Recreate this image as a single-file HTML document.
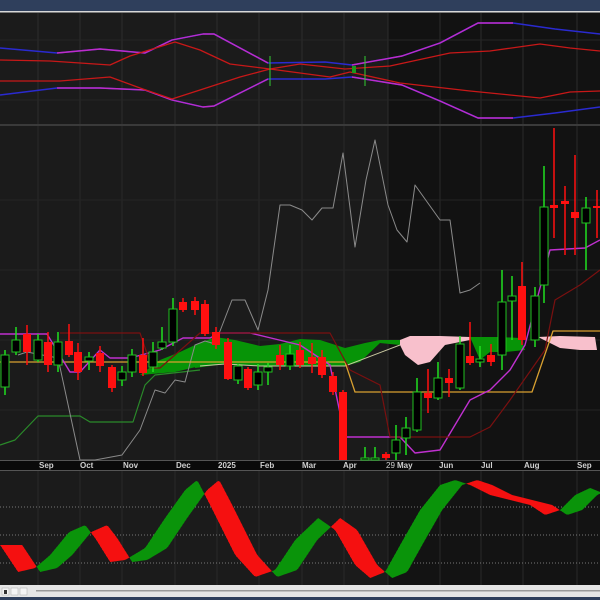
<!DOCTYPE html>
<html><head><meta charset="utf-8"><style>
html,body{margin:0;padding:0;background:#1b1b1b;width:600px;height:600px;overflow:hidden}
svg{display:block}
text{font-family:"Liberation Sans",sans-serif;font-size:8px;font-weight:bold;fill:#d0d0d0}
</style></head><body>
<svg id="s" width="600" height="600" xmlns="http://www.w3.org/2000/svg">
<rect x="0" y="0" width="600" height="600" fill="#1b1b1b"/>
<rect x="388" y="13" width="212" height="448" fill="#121212"/>
<rect x="388" y="471" width="212" height="114" fill="#131313"/>
<rect x="0" y="0" width="600" height="11" fill="#2f3f5c"/>
<rect x="0" y="11" width="600" height="1.5" fill="#d8d8d8"/>
<rect x="0" y="124" width="600" height="2" fill="#3a3a3a"/>
<rect x="0" y="460" width="600" height="11" fill="#0a0a0a"/>
<line x1="0" y1="460.5" x2="600" y2="460.5" stroke="#555"/>
<line x1="0" y1="470.5" x2="600" y2="470.5" stroke="#555"/>
<g id="grid"></g>
<g id="top"></g>
<g id="main"></g>
<g id="osc"></g>
<g>
<text x="39" y="468">Sep</text><text x="80" y="468">Oct</text><text x="123" y="468">Nov</text>
<text x="176" y="468">Dec</text><text x="218" y="468">2025</text><text x="260" y="468">Feb</text>
<text x="302" y="468">Mar</text><text x="343" y="468">Apr</text><text x="386" y="468" style="font-weight:normal">29</text>
<text x="397" y="468">May</text><text x="439" y="468">Jun</text><text x="481" y="468">Jul</text>
<text x="524" y="468">Aug</text><text x="577" y="468">Sep</text>
</g>
<rect x="0" y="585" width="600" height="12" fill="#e6e6e6"/>
<rect x="36" y="590" width="564" height="1.5" fill="#9a9a9a"/>
<rect x="2" y="588" width="7" height="7" fill="#f4f4f4" stroke="#aaa" stroke-width="0.5"/>
<rect x="4" y="590" width="3" height="4" fill="#333"/>
<rect x="11" y="588" width="7" height="7" fill="#f4f4f4" stroke="#aaa" stroke-width="0.5"/>
<rect x="20" y="588" width="7" height="7" fill="#f4f4f4" stroke="#aaa" stroke-width="0.5"/>
<rect x="0" y="597" width="600" height="3" fill="#2f3f5c"/>
</svg>
<script>
var NS="http://www.w3.org/2000/svg";
function el(p,t,a){var e=document.createElementNS(NS,t);for(var k in a)e.setAttribute(k,a[k]);document.getElementById(p).appendChild(e);return e;}
function pl(p,pts,c,w){el(p,"polyline",{points:pts.map(function(q){return q[0]+","+q[1]}).join(" "),fill:"none",stroke:c,"stroke-width":w||1.3,"stroke-linejoin":"round"});}
[38,80,122,175,217,259,302,344,388,440,481,523,577].forEach(function(x){
 el("grid","line",{x1:x,y1:13,x2:x,y2:124,stroke:"#2c2c2c"});
 el("grid","line",{x1:x,y1:126,x2:x,y2:460,stroke:"#2a2a2a"});
 el("grid","line",{x1:x,y1:471,x2:x,y2:585,stroke:"#2a2a2a"});
});
[40,100].forEach(function(y){el("grid","line",{x1:0,y1:y,x2:600,y2:y,stroke:"#262626"});});
[200,270,340,410].forEach(function(y){el("grid","line",{x1:0,y1:y,x2:600,y2:y,stroke:"#242424"});});
[507,535,563].forEach(function(y){el("grid","line",{x1:0,y1:y,x2:600,y2:y,stroke:"#777","stroke-dasharray":"1,2"});});
var ub=[[0,48],[57,53],[100,49],[145,53],[172,40],[203,34],[214,34],[268,63],[325,62],[352,65],[402,56],[440,43],[478,23],[513,23],[555,29],[600,34]];
var lb=[[0,95],[57,88],[100,88],[145,90],[172,100],[203,107],[214,106],[268,79],[325,79],[352,77],[402,85],[440,101],[478,118],[513,118],[555,113],[600,107]];
pl("top",ub,"#2a2ad0",1.6);pl("top",lb,"#2a2ad0",1.6);
pl("top",ub.slice(1,8),"#c02cc8",1.4);pl("top",lb.slice(1,8),"#c02cc8",1.4);
pl("top",ub.slice(9,14),"#c02cc8",1.4);pl("top",lb.slice(9,14),"#c02cc8",1.4);
pl("top",[[0,60],[50,61],[110,65],[130,56],[175,42],[200,50],[230,64],[270,69],[300,64],[345,69],[390,66],[450,53],[490,51],[540,44],[570,48],[600,51]],"#c81818",1.3);
pl("top",[[0,81],[60,81],[110,77],[140,88],[172,99],[200,90],[240,77],[270,69],[330,77],[350,72],[400,83],[470,91],[510,95],[540,98],[570,92],[600,91]],"#c81818",1.3);
el("top","line",{x1:270,y1:56,x2:270,y2:86,stroke:"#3c3",});el("top","line",{x1:365,y1:56,x2:365,y2:86,stroke:"#3c3"});
el("top","rect",{x:352,y:66,width:4,height:7,fill:"#1a9a1a"});
el("main","polygon",{points:"195,345 215,337 235,340 260,346 280,344 300,339 320,340 345,348 365,343 380,340 400,340 400,345 380,343 360,362 345,366 320,366 290,366 260,366 225,364 195,368",fill:"#079407"});
el("main","polygon",{points:"140,375 175,372 200,366 195,345 180,352 160,360",fill:"#079407"});
el("main","polygon",{points:"400,340 410,336 440,336 470,337 470,340 445,345 430,362 418,365 405,355 400,345",fill:"#f8c0cc"});
el("main","polygon",{points:"470,337 500,337 520,338 525,350 505,352 490,352 480,360",fill:"#079407"});
el("main","polygon",{points:"538,337 560,336 595,337 597,350 580,350 560,348",fill:"#f8c0cc"});
pl("main",[[200,366],[225,364],[260,366],[290,366],[345,366],[400,345]],"#c8c8a0",1);
pl("main",[[0,445],[15,440],[38,416],[80,416],[90,422],[133,422],[145,385],[155,375],[200,370]],"#2a8a2a",1.2);
pl("main",[[18,355],[27,352],[58,358],[80,460],[95,460],[122,455],[140,430],[155,390],[165,393],[175,380],[185,382],[195,345],[205,341],[215,344],[232,300],[245,300],[258,330],[268,290],[280,205],[290,205],[302,210],[312,220],[322,208],[333,208],[343,153],[355,247],[366,180],[375,140],[388,205],[397,230],[407,242],[415,185],[440,220],[450,220],[460,293],[470,290],[480,283]],"#8a8a8a",1);
pl("main",[[0,362],[345,362],[355,392],[532,392],[553,331],[600,331]],"#d8a030",1.3);
pl("main",[[0,334],[47,334],[70,372],[80,372],[100,350],[110,358],[130,358],[160,350],[183,338],[210,338],[220,333],[250,333],[300,345],[330,365],[345,437],[400,437],[415,453],[440,450],[470,400],[490,390],[510,370],[525,345],[550,250],[585,248],[600,240]],"#c030d0",1.4);
pl("main",[[60,333],[140,333],[152,368],[160,368],[200,333],[330,333],[350,370],[380,385],[390,437],[470,437],[490,427],[510,400],[545,350],[555,300],[580,285],[600,270]],"#7a1010",1.2);
var c=[[5,355,387,350,395,0],[16,340,352,327,355,0],[27,334,352,325,365,1],[38,340,360,334,362,0],[48,342,365,332,372,1],[58,342,365,332,372,0],[69,341,355,324,357,1],[78,352,372,343,380,1],[89,357,361,352,370,0],[100,353,366,346,372,1],[112,367,388,365,392,1],[122,372,380,366,386,0],[132,355,372,349,377,0],[143,355,373,338,376,1],[153,352,367,342,372,0],[162,342,348,327,350,0],[173,309,342,298,346,0],[183,302,310,298,312,1],[195,301,310,297,315,1],[205,304,334,300,336,1],[216,332,345,327,349,1],[228,342,379,338,380,1],[238,366,380,364,384,0],[248,369,388,367,390,1],[258,372,385,364,390,0],[268,367,372,363,385,0],[280,355,365,345,370,1],[290,354,366,345,370,0],[300,350,365,342,368,1],[312,357,364,343,373,1],[322,357,375,350,378,1],[333,376,392,372,395,1],[343,392,460,390,460,1],[365,458,460,447,460,0],[375,458,460,447,460,0],[386,454,458,452,460,1],[396,440,453,425,460,0],[406,428,438,417,455,0],[417,392,430,378,432,0],[428,393,398,369,413,1],[438,378,398,362,400,0],[449,378,383,369,397,1],[460,344,388,336,390,0],[470,356,363,322,365,1],[480,359,362,346,367,0],[491,355,362,344,366,1],[502,302,355,270,370,0],[512,296,301,276,340,0],[522,286,340,262,345,1],[535,296,340,287,347,0],[544,207,285,166,303,0],[554,205,208,128,238,1],[565,201,204,186,255,1],[575,212,218,155,255,1],[586,208,223,197,270,0],[597,206,207,190,238,1]];
c.forEach(function(k){var r=k[5];var col=r?"#ff1010":"#20e020";
 el("main","line",{x1:k[0],y1:k[3],x2:k[0],y2:k[4],stroke:col,"stroke-width":1.5});
 var h=Math.max(2,k[2]-k[1]);
 el("main","rect",{x:k[0]-4,y:k[1],width:8,height:h,fill:r?"#ff1010":"#000",stroke:r?"none":"#20c020","stroke-width":1});
});
var A=[[0,545],[18,572],[35,568],[50,555],[69,532],[85,525],[95,538],[110,562],[125,560],[145,548],[165,518],[185,490],[197,480],[210,505],[235,555],[255,577],[275,570],[295,540],[318,518],[335,530],[355,565],[370,578],[385,572],[400,545],[420,510],[440,485],[455,480],[470,485],[490,495],[510,500],[530,505],[545,515],[560,510],[575,495],[590,488],[600,492],[640,495]];
function f(x){if(x<=A[0][0])return A[0][1];for(var i=1;i<A.length;i++){if(x<=A[i][0]){var t=(x-A[i-1][0])/(A[i][0]-A[i-1][0]);return A[i-1][1]+t*(A[i][1]-A[i-1][1]);}}return A[A.length-1][1];}
var S=22;
for(var x=0;x<600;x+=2){var a1=f(x),a2=f(x+2),b1=f(x-S),b2=f(x+2-S);
 var g=(a1+a2)<(b1+b2);
 el("osc","polygon",{points:x+","+a1+" "+(x+2.3)+","+a2+" "+(x+2.3)+","+b2+" "+x+","+b1,fill:g?"#0a940a":"#f51010"});}
</script>
</body></html>
